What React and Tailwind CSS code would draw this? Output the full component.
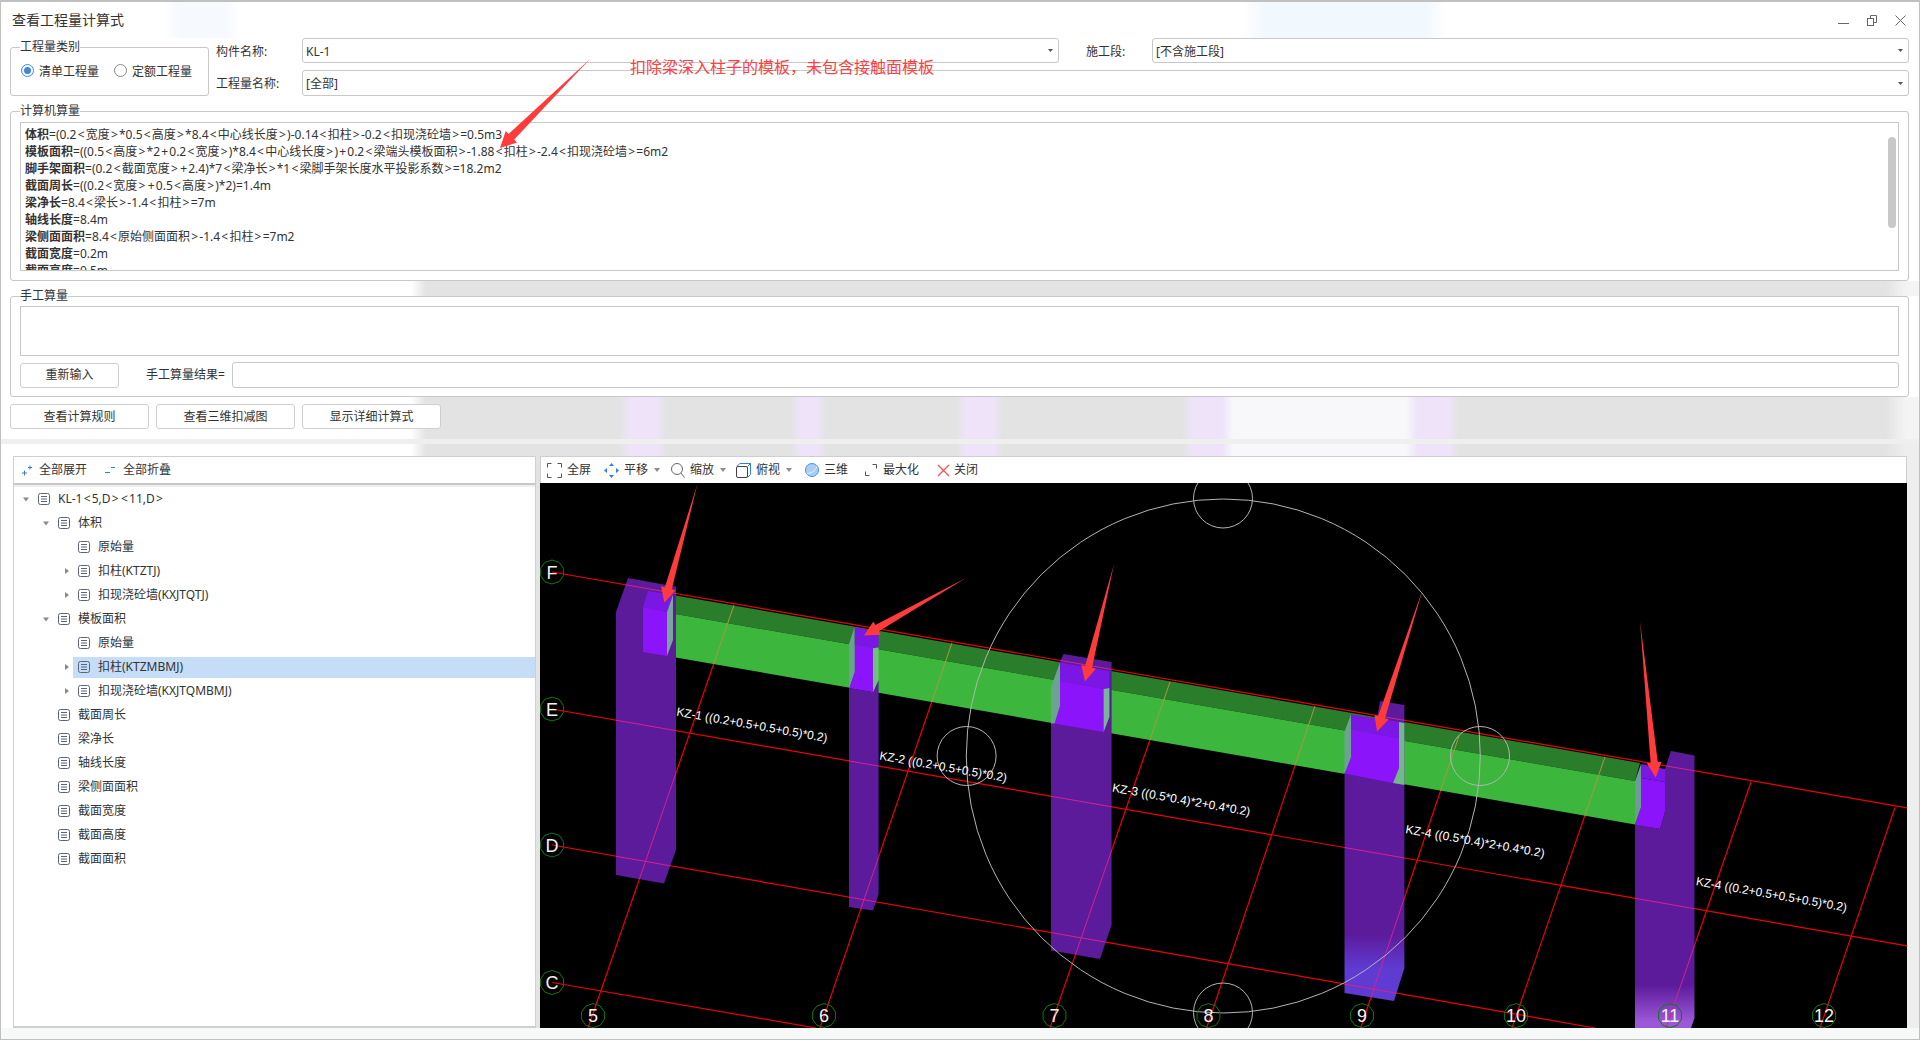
import React from "react";

const formulas = [
  ["体积", "=(0.2<宽度>*0.5<高度>*8.4<中心线长度>)-0.14<扣柱>-0.2<扣现浇砼墙>=0.5m3"],
  ["模板面积", "=((0.5<高度>*2+0.2<宽度>)*8.4<中心线长度>)+0.2<梁端头模板面积>-1.88<扣柱>-2.4<扣现浇砼墙>=6m2"],
  ["脚手架面积", "=(0.2<截面宽度>+2.4)*7<梁净长>*1<梁脚手架长度水平投影系数>=18.2m2"],
  ["截面周长", "=((0.2<宽度>+0.5<高度>)*2)=1.4m"],
  ["梁净长", "=8.4<梁长>-1.4<扣柱>=7m"],
  ["轴线长度", "=8.4m"],
  ["梁侧面面积", "=8.4<原始侧面面积>-1.4<扣柱>=7m2"],
  ["截面宽度", "=0.2m"],
  ["截面高度", "=0.5m"],
];

const tree = [
  { t: "KL-1<5,D><11,D>", l: 0, c: "open" },
  { t: "体积", l: 1, c: "open" },
  { t: "原始量", l: 2 },
  { t: "扣柱(KTZTJ)", l: 2, c: "closed" },
  { t: "扣现浇砼墙(KXJTQTJ)", l: 2, c: "closed" },
  { t: "模板面积", l: 1, c: "open" },
  { t: "原始量", l: 2 },
  { t: "扣柱(KTZMBMJ)", l: 2, c: "closed", sel: true },
  { t: "扣现浇砼墙(KXJTQMBMJ)", l: 2, c: "closed" },
  { t: "截面周长", l: 1 },
  { t: "梁净长", l: 1 },
  { t: "轴线长度", l: 1 },
  { t: "梁侧面面积", l: 1 },
  { t: "截面宽度", l: 1 },
  { t: "截面高度", l: 1 },
  { t: "截面面积", l: 1 },
];

const levelPad = ["pl-[8px]", "pl-[28px]", "pl-[48px]"];

function Spaced({ text }) {
  return text.split(/([<>+])/).map((part, i) =>
    i % 2 === 1 ? (
      <span key={i} className="px-[1.2px]">{part}</span>
    ) : (
      part
    )
  );
}

function DocIcon() {
  return (
    <svg width="12" height="12" viewBox="0 0 12 12" fill="none" className="shrink-0">
      <rect x="0.5" y="0.5" width="11" height="11" rx="2" stroke="#5a6378" />
      <path d="M3 3.5H9M3 6H9M3 8.5H9" stroke="#5a6378" />
    </svg>
  );
}

function TreeCaret({ kind }) {
  if (kind === "open")
    return (
      <svg width="8" height="8" viewBox="0 0 8 8" className="shrink-0">
        <path d="M1 2.5H7L4 6.5Z" fill="#8a8a8a" />
      </svg>
    );
  if (kind === "closed")
    return (
      <svg width="8" height="8" viewBox="0 0 8 8" className="shrink-0">
        <path d="M3 1V7L7 4Z" fill="#8a8a8a" />
      </svg>
    );
  return <span className="w-[8px] shrink-0" />;
}

function SmallCaret({ cls }) {
  return (
    <svg width="6" height="4" viewBox="0 0 6 4" className={cls}>
      <path d="M0 0H6L3 4Z" fill="#8c8c8c" />
    </svg>
  );
}

function SelectCaret() {
  return (
    <svg width="5" height="3" viewBox="0 0 5 3" className="shrink-0">
      <path d="M0 0H5L2.5 3Z" fill="#555" />
    </svg>
  );
}

function Group({ label, cls, children }) {
  return (
    <div className={"relative border border-[#c8c8c8] rounded-[3px] bg-white " + cls}>
      <span className="absolute left-[9px] -top-[9px] leading-[16px] bg-white text-[12px] text-[#333]">{label}</span>
      {children}
    </div>
  );
}

function Radio({ on }) {
  return (
    <span className={"w-[13px] h-[13px] rounded-full border flex items-center justify-center shrink-0 " + (on ? "border-[#3f87d9]" : "border-[#8a8a8a]")}>
      {on && <span className="w-[7px] h-[7px] rounded-full bg-[#3f87d9]" />}
    </span>
  );
}

function Btn({ children, cls }) {
  return (
    <div className={"h-[25px] flex items-center justify-center border border-[#cfcfcf] rounded-[3px] bg-white text-[12px] text-[#333] " + cls}>
      {children}
    </div>
  );
}

function Select({ text, cls }) {
  return (
    <div className={"flex items-center justify-between border border-[#c8c8c8] rounded-[3px] bg-white pl-[3px] pr-[5px] text-[12px] text-[#333] " + cls}>
      <span className="pt-[2px]">{text}</span>
      <SelectCaret />
    </div>
  );
}

function arrowPts([tx, ty], [hx, hy], headHalf = 7.5, headLen = 15, bodyHalf = 3.6) {
  const d = Math.hypot(hx - tx, hy - ty);
  const ux = (hx - tx) / d;
  const uy = (hy - ty) / d;
  const nx = -uy;
  const ny = ux;
  const bx = hx - ux * headLen;
  const by = hy - uy * headLen;
  const p = [
    [tx, ty],
    [bx + nx * bodyHalf, by + ny * bodyHalf],
    [bx + nx * headHalf, by + ny * headHalf],
    [hx, hy],
    [bx - nx * headHalf, by - ny * headHalf],
    [bx - nx * bodyHalf, by - ny * bodyHalf],
  ];
  return p.map((q) => q.join(",")).join(" ");
}

function ngon(cx, cy, r, n = 10) {
  const out = [];
  for (let i = 0; i < n; i++) {
    const a = (Math.PI * 2 * i) / n + Math.PI / 2;
    out.push((cx + r * Math.cos(a)).toFixed(1) + "," + (cy + r * Math.sin(a)).toFixed(1));
  }
  return out.join(" ");
}

const gridLines = [
  [552, 572, 1908, 808],
  [552, 709, 1908, 946],
  [552, 845, 1595, 1028],
  [552, 982.5, 816, 1028],
  [734, 605, 588, 1028],
  [952, 642.7, 820, 1028],
  [1170, 682, 1050, 1028],
  [1315, 706, 1206.6, 1028],
  [1459, 736, 1360.6, 1028],
  [1605, 756.7, 1512, 1028],
  [1751, 782, 1666, 1028],
  [1895, 807.5, 1820, 1028],
];

const columns = [
  "616,612 628,578 676,586.7 676,850 664,883.5 616,875",
  "849,688 873,692 878.6,680 878.6,894 873,910.6 849,907",
  "1063.5,654 1111.6,662 1111.6,925 1100,959 1051,950.5 1051,723 1060,662",
  "1380,701 1404.4,705 1404.4,968 1394,1001 1344.5,993 1344.5,773 1376,725",
  "1635,824 1660,829 1665,812 1665,769 1671,751 1694.5,755.5 1694.5,1018 1691,1028 1635,1028",
];

const brightTop = [
  "648,591 673,595 673,604 667,612 643,607",
  "854.5,627 878.6,631.4 878.6,647.5 873,648.3 854.5,645",
  "1060,662.6 1109.4,671 1109.4,688 1103.6,689 1060,681",
  "1351,714.5 1399,721.7 1399,738 1351,730",
  "1641,764 1665,769 1665,782 1641,778",
];

const brightFront = [
  "643,607 667,612 667,656 643,652",
  "854.5,645 873,648.3 873,692 849,688 854.5,672",
  "1060,681 1103.6,689 1103.6,732 1054.5,723.6 1060,706",
  "1351,730 1399,738 1399,768 1393,783 1344.5,773.6 1351,756.7",
  "1641,778 1665,782 1665,812 1660,829 1635,824.4 1641,807.5",
];

const glass = [
  ["667,612 673,595 673,640 667,656", "#79a59c"],
  ["849,644 854.5,627 854.5,672 849,688", "#6aa48f"],
  ["873,648.3 878.6,647.5 878.6,680 873,692", "#70c27a"],
  ["1051,687 1060,662.6 1060,706 1054.5,723.6 1051,723.6", "#6aa48f"],
  ["1103.6,689 1109.4,688 1109.4,717 1103.6,732", "#79b596"],
  ["1344.5,731.5 1351,714.5 1351,756.7 1344.5,773.6", "#6aa48f"],
  ["1393,783 1399,768 1399,722 1404.4,723 1404.4,785", "#72b98a"],
  ["1635,781 1641,764 1641,807.5 1635,824.4", "#6d9c96"],
];

const arrows = [
  [[697.4, 484], [664.3, 602.7]],
  [[966, 578], [864, 635.5]],
  [[1114, 564], [1085, 681.4]],
  [[1423, 588.5], [1377, 731.5]],
  [[1640, 621], [1655.7, 777.4]],
];

const axisLetters = [["F", 552, 572], ["E", 552, 709], ["D", 552, 845], ["C", 552, 982.5]];
const axisNums = [["5", 593], ["6", 824], ["7", 1054.5], ["8", 1208.5], ["9", 1362], ["10", 1516], ["11", 1670], ["12", 1824]];

const labels = [
  ["KZ-1 ((0.2+0.5+0.5+0.5)*0.2)", 676, 715.5, 153],
  ["KZ-2 ((0.2+0.5+0.5)*0.2)", 879, 759.5, 129],
  ["KZ-3 ((0.5*0.4)*2+0.4*0.2)", 1111.7, 791.5, 140],
  ["KZ-4 ((0.5*0.4)*2+0.4*0.2)", 1405, 833, 141],
  ["KZ-4 ((0.2+0.5+0.5+0.5)*0.2)", 1695.4, 885, 153],
];

function Scene() {
  return (
    <svg width="1367" height="545" viewBox="540 483 1367 545" className="block bg-black">
      <defs>
        <linearGradient id="col4" gradientUnits="userSpaceOnUse" x1="0" y1="935" x2="0" y2="968">
          <stop offset="0" stopColor="#5c1b9b" />
          <stop offset="1" stopColor="#5f3bd2" />
        </linearGradient>
        <linearGradient id="col5" gradientUnits="userSpaceOnUse" x1="0" y1="985" x2="0" y2="1022">
          <stop offset="0" stopColor="#5c1b9b" />
          <stop offset="1" stopColor="#9c58d8" />
        </linearGradient>
        <clipPath id="clipCols">
          {columns.map((p, i) => <polygon key={i} points={p} />)}
        </clipPath>
        <clipPath id="clipBeam">
          <polygon points="673,595 1640,763 1635,824.4 667,656" />
        </clipPath>
      </defs>
      <g stroke="#f00000" strokeWidth="1.2">
        {gridLines.map((l, i) => <line key={i} x1={l[0]} y1={l[1]} x2={l[2]} y2={l[3]} />)}
      </g>
      <polygon points="673,595 1640,763 1635,781 667,612.5" fill="#2a7d2a" />
      <polygon points="667,612.5 1635,781 1635,824.4 667,656" fill="#3db63e" />
      {columns.map((p, i) => (
        <polygon key={i} points={p} fill={i === 3 ? "url(#col4)" : i === 4 ? "url(#col5)" : "#5c1b9b"} />
      ))}
      <g stroke="#a89a3c" strokeWidth="1" clipPath="url(#clipBeam)">
        {gridLines.map((l, i) => <line key={i} x1={l[0]} y1={l[1]} x2={l[2]} y2={l[3]} />)}
      </g>
      <g stroke="#d6218f" strokeWidth="1" clipPath="url(#clipCols)">
        {gridLines.map((l, i) => <line key={i} x1={l[0]} y1={l[1]} x2={l[2]} y2={l[3]} />)}
      </g>
      {brightTop.map((p, i) => <polygon key={i} points={p} fill="#7a17e4" />)}
      {brightFront.map((p, i) => <polygon key={i} points={p} fill="#8c14fb" />)}
      {glass.map(([p, c], i) => <polygon key={i} points={p} fill={c} />)}
      <g fill="none" stroke="#b4b4b4" strokeWidth="1">
        <circle cx="1223.3" cy="756" r="257" />
        <circle cx="1223" cy="498.5" r="29.5" />
        <circle cx="1223" cy="1012.5" r="29.5" />
        <circle cx="966.6" cy="756" r="29.5" />
        <circle cx="1480" cy="756" r="29.5" />
      </g>
      {arrows.map(([a, b], i) => <polygon key={i} points={arrowPts(a, b)} fill="#ff3b3b" />)}
      {axisLetters.map(([t, x, y]) => (
        <g key={t}>
          <polygon points={ngon(x, y, 12)} fill="none" stroke="#0c7a0c" />
          <text x={x} y={y + 6.5} textAnchor="middle" fontSize="18" fill="#f2f2f2" fontFamily="'Liberation Sans', sans-serif">{t}</text>
        </g>
      ))}
      {axisNums.map(([t, x]) => (
        <g key={t}>
          <polygon points={ngon(x, 1015.6, 12)} fill="none" stroke="#0c7a0c" />
          <text x={x} y={1022} textAnchor="middle" fontSize="18" fill="#f2f2f2" fontFamily="'Liberation Sans', sans-serif">{t}</text>
        </g>
      ))}
      {labels.map(([t, x, y, w]) => (
        <text key={x} x={x} y={y} fontSize="12" fill="#ffffff" textLength={w} lengthAdjust="spacingAndGlyphs" transform={"rotate(10 " + x + " " + y + ")"} fontFamily="'Liberation Sans', sans-serif">{t}</text>
      ))}
    </svg>
  );
}

const TB = "text-[12px] text-[#333] whitespace-nowrap";

function Toolbar() {
  return (
    <div className="h-[27px] flex items-center bg-white border border-b-0 border-[#cfcfcf] pl-[6px]">
      <svg width="15" height="15" viewBox="0 0 15 15" fill="none" stroke="#555" className="shrink-0">
        <path d="M0.5 4.5V0.5H4.5M10.5 0.5H14.5V4.5M14.5 10.5V14.5H10.5M4.5 14.5H0.5V10.5" />
      </svg>
      <span className={"ml-[5px] " + TB}>全屏</span>
      <svg width="15" height="15" viewBox="0 0 15 15" fill="#2f7fe0" className="ml-[13px] shrink-0">
        <path d="M7.5 0L10 3H5ZM7.5 15L5 12H10ZM0 7.5L3 5V10ZM15 7.5L12 10V5Z" />
      </svg>
      <span className={"ml-[5px] " + TB}>平移</span>
      <SmallCaret cls="ml-[6px] shrink-0" />
      <svg width="14" height="15" viewBox="0 0 14 15" fill="none" stroke="#666" className="ml-[11px] shrink-0">
        <circle cx="6" cy="6" r="5.5" />
        <path d="M10 10L13.5 14.5" />
      </svg>
      <span className={"ml-[5px] " + TB}>缩放</span>
      <SmallCaret cls="ml-[6px] shrink-0" />
      <svg width="15" height="15" viewBox="0 0 15 15" fill="none" className="ml-[10px] shrink-0">
        <rect x="0.5" y="3.5" width="11" height="11" rx="1.5" stroke="#444" />
        <path d="M0.8 3.5L3.8 0.5H14.5V11.5L11.5 14.5M11.5 3.5L14.5 0.5" stroke="#2f7fe0" />
      </svg>
      <span className={"ml-[5px] " + TB}>俯视</span>
      <SmallCaret cls="ml-[6px] shrink-0" />
      <svg width="14" height="14" viewBox="0 0 14 14" fill="#a9cdf5" stroke="#4a90e2" className="ml-[13px] shrink-0">
        <circle cx="7" cy="7" r="6.5" />
        <path d="M2 10.5C6 10.5 10 8 12 3.5" fill="none" stroke="#e8f2fd" />
      </svg>
      <span className={"ml-[5px] " + TB}>三维</span>
      <svg width="12" height="12" viewBox="0 0 12 12" fill="none" stroke="#555" className="ml-[17px] shrink-0">
        <path d="M7.5 0.5H11.5V4.5M0.5 7.5V11.5H4.5" />
      </svg>
      <span className={"ml-[6px] " + TB}>最大化</span>
      <svg width="13" height="13" viewBox="0 0 13 13" fill="none" stroke="#f0555a" strokeWidth="1.3" className="ml-[18px] shrink-0">
        <path d="M1 1L12 12M12 1L1 12" />
      </svg>
      <span className={"ml-[4px] " + TB}>关闭</span>
    </div>
  );
}

export default function App() {
  return (
    <div className="relative w-[1920px] h-[1040px] overflow-hidden flex flex-col bg-white border-t-2 border-l border-r border-b border-[#c0c0c0] font-['Noto_Sans','Noto_Sans_CJK_SC',sans-serif] text-[12px] text-[#333]">
      {/* title bar */}
      <div className="h-[36px] shrink-0 flex items-center justify-between pl-[11px] pr-[13px] bg-[linear-gradient(90deg,#fff_160px,#f6fafe_180px,#f6fafe_225px,#fff_240px,#fff_1240px,#f1f8fe_1265px,#f1f8fe_1425px,#fff_1445px)]">
        <span className="text-[14px] leading-[20px] text-[#333]">查看工程量计算式</span>
        <div className="flex items-center gap-[18px]">
          <svg width="11" height="12" viewBox="0 0 11 12" fill="none" stroke="#666">
            <path d="M0 9.5H11" />
          </svg>
          <svg width="10" height="11" viewBox="0 0 10 11" fill="none" stroke="#666">
            <rect x="0.5" y="3.5" width="6" height="7" />
            <path d="M3.5 3V0.5H9.5V7.5H7" />
          </svg>
          <svg width="11" height="11" viewBox="0 0 11 11" fill="none" stroke="#666">
            <path d="M0.5 0.5L10.5 10.5M10.5 0.5L0.5 10.5" />
          </svg>
        </div>
      </div>

      {/* top form */}
      <div className="h-[58px] shrink-0 flex pl-[9px] pr-[10px]">
        <Group label="工程量类别" cls="w-[199px] h-[49px] mt-[9px] flex items-start pt-[16px] pl-[10px]">
          <Radio on />
          <span className="ml-[5px] leading-[15px]">清单工程量</span>
          <span className="ml-[15px]"><Radio /></span>
          <span className="ml-[5px] leading-[15px]">定额工程量</span>
        </Group>
        <div className="flex-1 ml-[6px] flex flex-col gap-[7px]">
          <div className="flex items-center">
            <span className="w-[87px] shrink-0 pl-[1px] pt-[2px]">构件名称:</span>
            <Select text="KL-1" cls="w-[757px] h-[25px]" />
            <span className="ml-[26px] w-[67px] shrink-0 pl-[1px] pt-[2px]">施工段:</span>
            <Select text="[不含施工段]" cls="flex-1 h-[25px]" />
          </div>
          <div className="flex items-center">
            <span className="w-[87px] shrink-0 pl-[1px] pt-[2px]">工程量名称:</span>
            <Select text="[全部]" cls="flex-1 h-[26px]" />
          </div>
        </div>
      </div>

      {/* computed */}
      <Group label="计算机算量" cls="h-[170px] mt-[15px] ml-[9px] mr-[10px] shrink-0 pt-[10px] pl-[9px] pr-[9px]">
        <div className="relative h-[149px] border border-[#c8c8c8] overflow-hidden pt-[3px] pl-[4px] leading-[17px]">
          {formulas.map(([a, b]) => (
            <div key={a} className="h-[17px] whitespace-nowrap">
              <span className="font-bold">{a}</span>
              <Spaced text={b} />
            </div>
          ))}
          <div className="absolute right-[2px] top-[14px] w-[8px] h-[91px] rounded-[4px] bg-[#c8c8c8]" />
        </div>
      </Group>

      {/* gap strip */}
      <div className="h-[15px] shrink-0 bg-[linear-gradient(90deg,#fff_410px,#e3e3e3_425px,#e3e3e3_1885px,#f4f4f4_1905px)]" />

      {/* manual */}
      <Group label="手工算量" cls="h-[101px] ml-[9px] mr-[10px] shrink-0 pt-[9px] pl-[9px] pr-[9px]">
        <div className="h-[50px] border border-[#c8c8c8]" />
        <div className="flex items-center mt-[6px]">
          <Btn cls="w-[99px]">重新输入</Btn>
          <span className="ml-[27px] w-[86px] shrink-0 whitespace-nowrap">手工算量结果=</span>
          <div className="flex-1 h-[26px] border border-[#c8c8c8] rounded-[3px]" />
        </div>
      </Group>

      {/* buttons strip */}
      <div className="h-[42px] shrink-0 pt-[7px] pl-[9px] flex gap-[7px] bg-[linear-gradient(90deg,#fff_410px,#e3e3e3_425px,#e3e3e3_618px,#efe3fa_630px,#efe3fa_655px,#e3e3e3_665px,#e3e3e3_790px,#efe3fa_800px,#efe3fa_815px,#e3e3e3_825px,#e3e3e3_955px,#efe3fa_965px,#efe3fa_992px,#e3e3e3_1002px,#e3e3e3_1182px,#efe3fa_1192px,#efe3fa_1222px,#f8f8fa_1232px,#f8f8fa_1405px,#efe3fa_1416px,#efe3fa_1448px,#e3e3e3_1458px,#e3e3e3_1885px,#f4f4f4_1905px)]">
        <Btn cls="w-[139px]">查看计算规则</Btn>
        <Btn cls="w-[139px]">查看三维扣减图</Btn>
        <Btn cls="w-[139px]">显示详细计算式</Btn>
      </div>
      <div className="h-[5px] shrink-0 bg-[#efefef]" />

      {/* lower panels */}
      <div className="h-[584px] shrink-0 pt-[12px] pl-[12px] flex gap-[4px] bg-[linear-gradient(90deg,#fff_410px,#e3e3e3_425px,#e3e3e3_618px,#efe3fa_630px,#efe3fa_655px,#e3e3e3_665px,#e3e3e3_790px,#efe3fa_800px,#efe3fa_815px,#e3e3e3_825px,#e3e3e3_955px,#efe3fa_965px,#efe3fa_992px,#e3e3e3_1002px,#e3e3e3_1182px,#efe3fa_1192px,#efe3fa_1222px,#f8f8fa_1232px,#f8f8fa_1405px,#efe3fa_1416px,#efe3fa_1448px,#e3e3e3_1458px,#e3e3e3_1885px,#eeeeee_1905px)]">
        <div className="w-[523px] h-[572px] flex flex-col bg-white border border-[#cfcfcf] border-b-2">
          <div className="h-[26px] shrink-0 flex items-center pl-[8px]">
            <svg width="10" height="11" viewBox="0 0 10 11" fill="none" stroke="#2f7fe0">
              <path d="M0 8H5M2.5 5.5V10.5M6 2.5H10M8 0.5V4.5" />
            </svg>
            <span className="ml-[7px]">全部展开</span>
            <svg width="10" height="11" viewBox="0 0 10 11" fill="none" stroke="#2f7fe0" className="ml-[18px]">
              <path d="M0 7.5H5M6 2.5H10" />
            </svg>
            <span className="ml-[8px]">全部折叠</span>
          </div>
          <div className="h-[4px] shrink-0 border-t-2 border-[#c8c8c8] bg-[#efefef]" />
          {tree.map((n, i) => (
            <div key={i} className={"h-[24px] shrink-0 flex items-center " + levelPad[n.l]}>
              <TreeCaret kind={n.c} />
              <div className={"ml-[3px] flex-1 h-[21px] flex items-center pl-[5px] " + (n.sel ? "bg-[#c5ddf7]" : "")}>
                <DocIcon />
                <span className="ml-[8px] whitespace-nowrap"><Spaced text={n.t} /></span>
              </div>
            </div>
          ))}
        </div>
        <div className="w-[1367px] flex flex-col">
          <Toolbar />
          <Scene />
        </div>
      </div>

      {/* footer */}
      <div className="flex-1 bg-[#f7f8f8]" />

      {/* annotation above the form */}
      <span className="absolute left-[629px] top-[54px] text-[16px] leading-[22px] text-[#ff4040] whitespace-nowrap">扣除梁深入柱子的模板，未包含接触面模板</span>
      <svg width="110" height="100" viewBox="0 0 110 100" className="absolute left-[494px] top-[56px] pointer-events-none">
        <polygon points={arrowPts([95, 1], [5, 90], 8, 16, 4)} fill="#ff3b3b" />
      </svg>
    </div>
  );
}
